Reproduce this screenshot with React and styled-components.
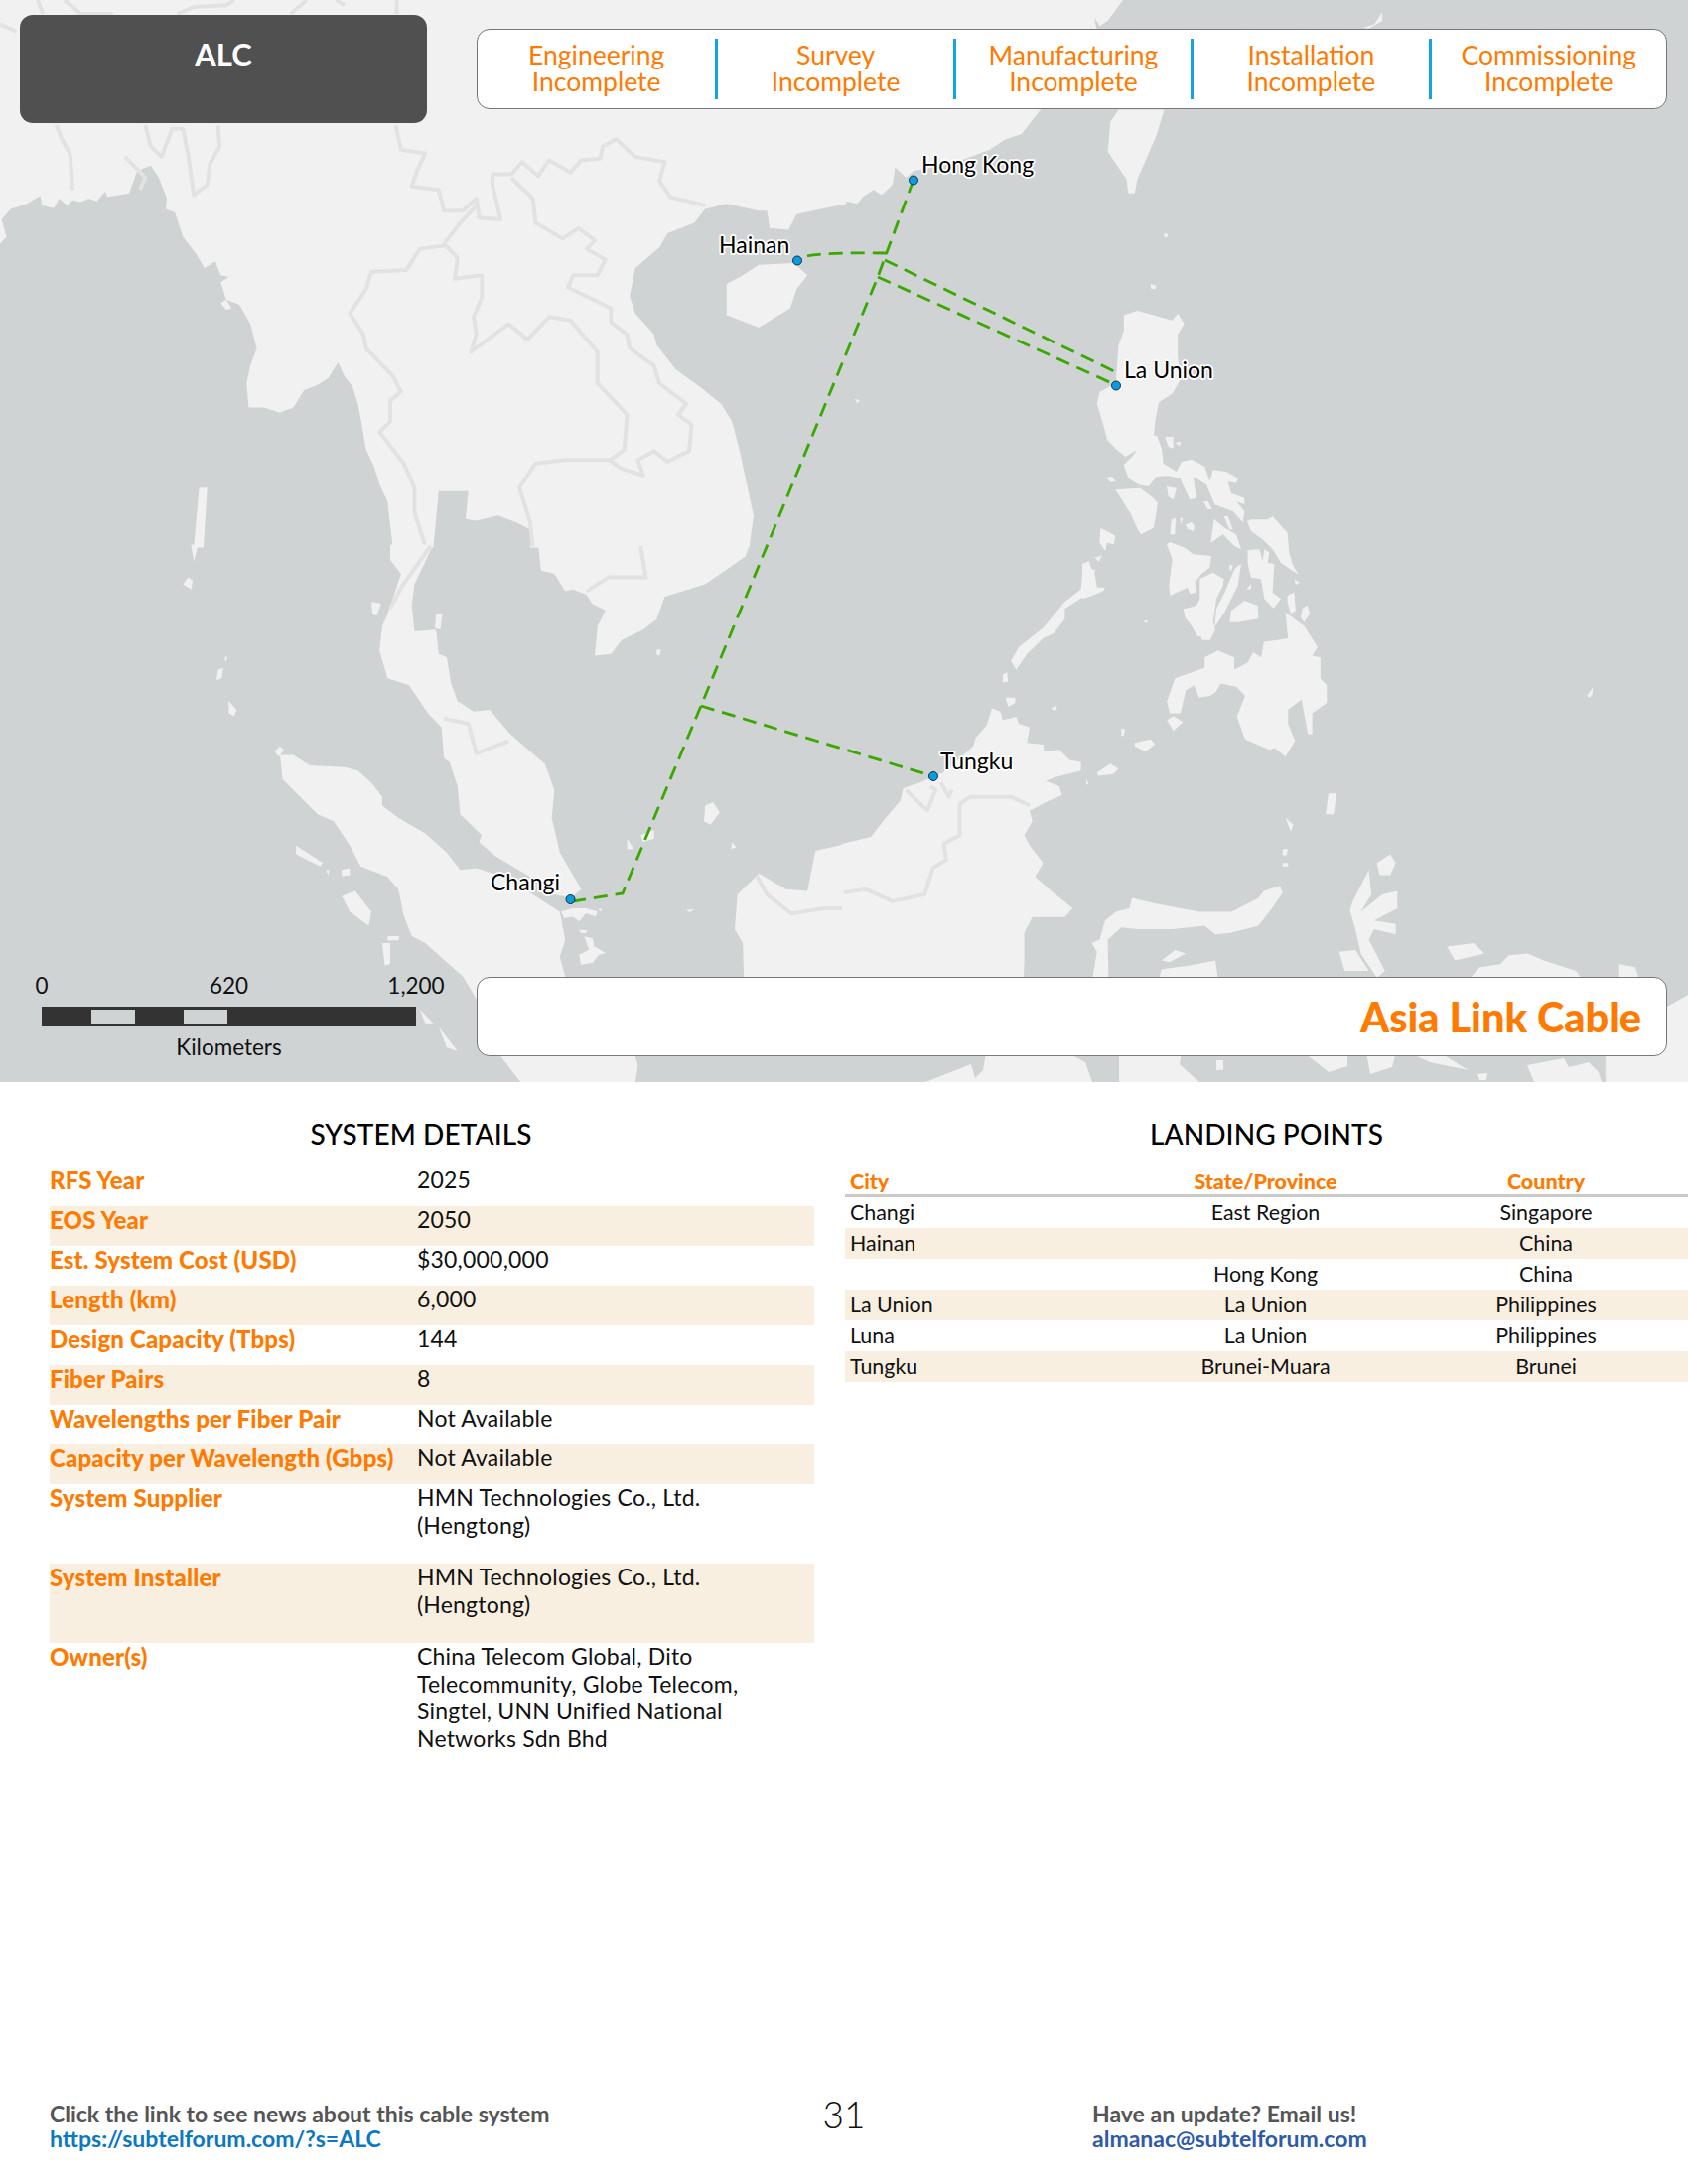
import React from 'react'
import styled, { createGlobalStyle } from 'styled-components'

const SEA = '#cfd3d4'
const LAND = '#f1f1f1'
const BORDER = '#e2e2e2'
const ORANGE = '#ff7a00'
const CABLE = '#3aa800'

const GlobalStyle = createGlobalStyle`
  html, body {
    margin: 0;
    padding: 0;
    background: #fff;
  }
  body {
    font-family: Lato, "Open Sans", "Liberation Sans", sans-serif;
    color: #000;
  }
  * {
    box-sizing: border-box;
  }
`

// land traced per piece of the map, each piece has its own scale below
const TILES = [
  {
    key: 'nw',
    transform: 'scale(.5421 .3509)',
    land: [
      'M-4,-4 L1572,-4 L1572,585 L1480,615 L1465,660 L1430,655 L1425,605 L1410,605 L1350,585 L1310,600 L1290,640 L1240,670 L1225,710 L1180,770 L1170,850 L1180,900 L1215,960 L1220,990 L1255,1060 L1300,1110 L1340,1160 L1360,1210 L1375,1300 L1400,1480 L1392,1572 L985,1572 L990,1525 L960,1500 L925,1480 L885,1495 L865,1490 L870,1410 L815,1410 L805,1572 L730,1572 L725,1510 L720,1440 L705,1390 L695,1340 L680,1290 L670,1200 L665,1160 L655,1110 L640,1080 L628,1040 L610,1085 L590,1105 L565,1120 L545,1170 L520,1185 L490,1170 L462,1170 L458,1100 L465,1050 L477,1000 L465,930 L445,875 L420,860 L410,810 L425,795 L410,790 L400,750 L380,770 L365,730 L340,680 L325,610 L308,600 L310,570 L295,510 L280,475 L255,490 L240,555 L200,565 L195,550 L180,578 L165,570 L150,580 L135,575 L125,590 L110,570 L100,598 L78,590 L75,562 L50,585 L20,600 L3,630 L12,680 L0,700 L-4,700 Z',
      'M1350,815 L1380,790 L1410,760 L1475,755 L1500,790 L1480,830 L1468,885 L1410,940 L1350,905 Z',
      'M370,1400 L385,1400 L378,1572 L360,1572 Z',
      'M410,870 L420,860 L430,885 L420,890 Z',
    ],
    borders: [
      'M105,360 L115,400 L130,440 L135,545',
      'M232,450 L270,510 L260,545',
      'M270,360 L280,420 L300,450 L320,370 L340,370 L350,450 L360,560 L385,530 L390,470 L408,420 L405,360',
      'M735,360 L745,430 L790,440 L775,490 L765,535 L815,545 L825,605 L860,605 L885,570 L890,625 L930,630 L915,530 L915,500 L950,500 L970,465 L1000,505 L1020,460 L1060,495 L1080,460 L1115,455 L1120,420 L1145,400 L1180,450 L1235,465 L1225,520 L1245,565 L1310,590',
      'M950,510 L990,570 L995,640 L1045,685 L1075,655 L1105,690 L1090,715 L1125,745 L1110,790 L1065,790 L1055,825 L1135,885 L1135,925 L1165,960 L1170,1000 L1215,1050 L1225,1100 L1275,1160 L1260,1190 L1285,1220 L1280,1295 L1240,1325 L1215,1295 L1185,1320 L1195,1365 L1155,1345 L1130,1320 L1050,1320 L995,1330 L965,1400 L985,1500 L990,1568',
      'M885,590 L855,640 L825,700 L850,740 L845,800 L895,790 L895,855 L880,910 L885,960 L875,1010 L945,930 L980,975 L1020,910 L1060,920 L1110,1010 L1110,1100 L1165,1190 L1160,1290 L1135,1320',
      'M825,705 L780,715 L755,775 L690,780 L680,830 L650,900 L675,960 L680,1000 L730,1080 L745,1125 L725,1150 L725,1210 L705,1240 L750,1330 L770,1400 L770,1470 L790,1568',
      'M70,0 L80,40',
      'M120,0 L150,40 L210,40',
      'M330,40 L360,20 L420,15 L435,0',
      'M540,40 L570,0',
      'M625,0 L640,15',
      'M737,0 L737,40',
      'M0,70 L30,90',
    ],
  },
  {
    key: 'ne',
    transform: 'translate(850 0) scale(.5421 .3509)',
    land: [
      'M-4,-4 L520,-4 L490,60 L475,75 L465,50 L470,90 L365,315 L330,385 L300,400 L270,430 L200,470 L130,490 L115,510 L95,480 L90,530 L70,560 L55,545 L35,565 L25,585 L-4,575 Z',
      'M510,315 L595,315 L580,390 L545,515 L540,555 L528,555 L525,515 L490,435 L495,350 Z',
      'M965,80 L985,70 L1000,35 L1000,60 L975,82 Z',
      'M520,905 L545,892 L610,920 L620,900 L632,930 L620,960 L620,1020 L625,1090 L610,1130 L585,1155 L578,1210 L575,1265 L490,1265 L478,1200 L470,1160 L475,1125 L505,1100 L510,990 L520,950 Z',
      'M570,815 L580,820 L578,830 L570,828 Z',
      'M595,670 L602,672 L600,682 L595,680 Z',
      'M20,1145 L30,1150 L24,1158 Z',
    ],
    borders: [],
  },
  {
    // philippines, traced at 3x
    key: 'visayas',
    transform: 'translate(1090 440) scale(.3333)',
    land: [
      'M72,5 L110,-4 L225,-4 L240,35 L245,80 L285,105 L300,75 L330,68 L370,90 L385,135 L395,100 L435,105 L470,125 L465,140 L440,135 L450,170 L490,185 L490,205 L465,195 L490,225 L485,258 L455,225 L400,205 L375,145 L335,120 L345,185 L325,190 L295,125 L260,118 L225,120 L200,150 L170,145 L140,125 L125,85 L150,60 L165,40 L130,60 L100,35 Z',
      'M250,0 L275,0 L275,35 L260,30 Z',
      'M280,18 L297,15 L295,28 Z',
      'M72,122 L90,120 L100,135 L85,137 Z',
      'M255,150 L285,155 L275,190 L260,180 Z',
      'M100,160 L175,155 L215,185 L228,200 L220,250 L215,275 L178,295 L170,285 L145,230 Z',
      'M365,195 L380,195 L392,218 L380,220 Z',
      'M270,250 L282,245 L280,295 L265,295 Z',
      'M295,245 L303,245 L298,265 Z',
      'M312,265 L330,258 L340,270 L335,285 L318,278 Z',
      'M428,240 L440,240 L455,280 L445,280 Z',
      'M398,248 L430,275 L465,295 L480,340 L460,330 L425,295 L388,320 Z',
      'M498,255 L510,250 L560,250 L575,240 L620,290 L625,350 L635,385 L652,415 L635,405 L600,380 L575,340 L545,310 L510,285 Z',
      'M500,342 L535,340 L545,375 L550,340 L565,350 L560,380 L580,385 L575,470 L600,490 L578,518 L550,490 L540,430 L510,425 L500,385 Z',
      'M55,275 L85,290 L100,300 L95,325 L75,320 L70,345 L52,320 Z',
      'M38,365 L60,358 L50,378 Z',
      'M0,385 L20,375 L30,405 L40,400 L30,430 L40,455 L68,455 L65,465 L30,480 L0,490 Z',
      'M255,325 L265,318 L310,335 L335,355 L390,360 L385,395 L360,415 L340,440 L345,470 L325,475 L318,455 L265,480 L262,450 L272,370 Z',
      'M445,385 L455,390 L450,405 L445,402 Z',
      'M355,430 L395,410 L428,430 L425,450 L405,490 L395,560 L400,575 L385,604 L350,604 L310,540 L310,520 L345,510 L355,490 Z',
      'M470,390 L480,385 L470,450 L430,530 L400,575 L405,520 L430,470 L460,400 Z',
      'M498,458 L510,445 L510,458 L500,462 Z',
      'M450,525 L490,495 L530,510 L532,550 L470,560 L445,560 Z',
      'M620,480 L640,470 L645,525 L630,535 L620,500 Z',
      'M640,430 L657,440 L645,447 Z',
      'M665,518 L680,510 L688,535 L670,560 L660,545 Z',
      'M188,555 L197,555 L197,562 L188,562 Z',
    ],
    borders: [],
  },
  {
    // riau islands below singapore, traced at 3x
    key: 'riau',
    transform: 'translate(540 860) scale(.3333)',
    land: [
      'M75,175 L110,165 L150,165 L185,175 L180,190 L150,180 L130,205 L110,190 L85,195 Z',
      'M130,230 L155,232 L150,240 L135,240 Z',
      'M145,250 L170,255 L175,280 L210,300 L190,305 L170,330 L135,335 L130,305 L160,290 Z',
      'M190,165 L198,167 L195,175 L190,172 Z',
    ],
    borders: [],
  },
  {
    key: 'sw',
    transform: 'translate(0 550) scale(.5421 .3509)',
    land: [
      'M1000,-4 L1005,70 L1030,80 L1050,130 L1065,125 L1090,140 L1100,165 L1125,185 L1110,230 L1105,315 L1135,310 L1155,270 L1195,240 L1220,210 L1235,145 L1310,110 L1385,30 L1392,-4 Z',
      'M725,-4 L805,-4 L770,110 L765,170 L770,245 L810,240 L815,310 L830,320 L838,395 L850,445 L880,475 L910,470 L945,535 L985,590 L1012,625 L1030,700 L1025,780 L1040,880 L1080,985 L1060,1010 L1030,1000 L985,950 L920,890 L890,850 L895,830 L855,770 L850,690 L835,620 L825,610 L820,520 L795,480 L760,400 L720,380 L705,300 L710,230 L720,195 L730,150 L745,80 L725,40 Z',
      'M520,600 L545,600 L575,630 L640,635 L665,645 L690,680 L710,720 L710,745 L740,780 L790,825 L830,880 L855,930 L885,925 L925,945 L965,975 L1040,1050 L1050,1130 L1040,1180 L1050,1236 L1180,1465 L1185,1490 L1180,1545 L970,1545 L930,1465 L885,1300 L860,1236 L790,1140 L765,1120 L750,1060 L740,985 L720,950 L670,920 L650,860 L620,790 L590,770 L525,670 Z',
      'M1572,855 L1515,875 L1500,990 L1460,985 L1410,940 L1370,1000 L1365,1100 L1380,1140 L1385,1400 L1572,1400 Z',
      'M350,90 L358,100 L355,125 L340,110 Z',
      'M355,-4 L368,-4 L360,45 Z',
      'M405,355 L415,350 L412,380 L402,385 Z',
      'M418,318 L422,318 L421,330 L418,330 Z',
      'M425,445 L440,470 L435,488 L425,480 Z',
      'M550,860 L600,910 L595,920 L550,885 Z',
      'M635,1005 L660,990 L690,1050 L685,1090 L650,1050 Z',
      'M605,930 L612,930 L610,945 Z',
      'M635,930 L650,925 L650,945 L635,948 Z',
      'M720,1120 L742,1120 L740,1132 L720,1132 Z',
      'M710,1140 L725,1140 L725,1200 L715,1205 Z',
      'M780,1330 L805,1370 L790,1370 Z',
      'M815,1380 L850,1450 L830,1440 Z',
      'M1310,745 L1325,735 L1337,765 L1320,800 L1308,790 Z',
      'M1165,840 L1178,870 L1165,870 Z',
      'M1190,830 L1215,815 L1215,840 L1195,850 Z',
      'M1360,850 L1368,865 L1358,870 Z',
      'M1275,1045 L1290,1042 L1282,1052 Z',
      'M1220,298 L1228,298 L1225,315 L1220,312 Z',
      'M510,590 L520,575 L528,585 L518,605 Z',
      'M690,160 L708,165 L700,200 L692,195 Z',
      'M810,195 L822,195 L818,240 L808,235 Z',
    ],
    borders: [
      'M825,495 L870,510 L885,595 L945,560',
      'M800,0 L745,120 L725,180',
      'M1190,0 L1200,90 L1130,90 L1090,130',
      'M1405,945 L1425,1000 L1470,1055 L1530,1040 L1568,1040',
    ],
  },
  {
    key: 'se',
    transform: 'translate(850 550) scale(.5421 .3509)',
    land: [
      'M445,50 L465,70 L470,120 L445,145 L410,180 L410,210 L390,250 L370,265 L340,310 L320,355 L310,330 L325,290 L370,235 L410,160 L440,125 Z',
      'M630,180 L690,170 L680,210 L690,240 L680,270 L665,270 L660,240 L635,210 Z',
      'M820,190 L855,230 L880,290 L870,315 L885,320 L885,380 L897,400 L897,450 L870,480 L870,540 L862,540 L850,440 L825,470 L825,510 L838,560 L820,605 L800,580 L790,585 L745,555 L730,490 L745,430 L730,405 L700,395 L690,420 L680,430 L660,435 L650,400 L635,415 L625,480 L605,480 L600,445 L615,380 L670,350 L670,320 L695,300 L725,320 L725,355 L750,335 L760,305 L775,320 L780,275 L805,270 L825,265 Z',
      'M600,500 L612,488 L630,505 L612,530 Z',
      'M540,565 L570,555 L578,570 L560,590 L540,575 Z',
      'M470,650 L495,625 L510,640 L500,655 L472,660 Z',
      'M295,370 L303,362 L305,390 L295,392 Z',
      'M300,435 L318,435 L318,450 L305,462 Z',
      'M-4,855 L50,835 L75,785 L105,730 L110,695 L140,680 L170,660 L185,650 L240,575 L245,550 L265,515 L275,465 L290,475 L295,500 L320,490 L325,510 L345,520 L340,565 L370,570 L372,590 L400,585 L420,615 L440,620 L440,645 L390,665 L375,675 L400,690 L405,715 L375,735 L345,760 L350,790 L335,830 L345,860 L370,910 L355,950 L385,990 L425,1040 L410,1065 L350,1065 L335,1110 L335,1190 L330,1400 L-4,1400 Z',
      'M810,975 L815,995 L795,1040 L770,1090 L720,1110 L690,1115 L670,1090 L610,1100 L545,1100 L515,1095 L490,1130 L492,1300 L455,1300 L470,1165 L460,1140 L475,1130 L485,1075 L505,1050 L530,1040 L535,1010 L575,1025 L660,1050 L720,1050 L770,1010 L780,990 Z',
      'M575,1300 L590,1215 L640,1205 L690,1190 L700,1300 Z',
      'M590,1190 L615,1160 L635,1170 L605,1195 Z',
      'M990,910 L1015,885 L1025,910 L1015,945 L995,945 Z',
      'M945,1020 L975,930 L980,1000 L960,1050 L1000,1000 L1028,990 L1028,1040 L985,1075 L1025,1085 L1025,1115 L985,1100 L975,1130 L1005,1220 L990,1240 L960,1170 L950,1100 L940,1045 Z',
      'M920,1165 L950,1160 L975,1220 L930,1220 Z',
      'M1130,1300 L1180,1210 L1220,1200 L1235,1175 L1270,1170 L1300,1190 L1360,1220 L1400,1300 Z',
      'M1440,1200 L1470,1210 L1490,1300 L1440,1240 Z',
      'M1120,1150 L1170,1140 L1190,1170 L1135,1190 Z',
      'M900,710 L915,710 L910,770 L895,770 Z',
      'M820,780 L835,800 L830,820 Z',
      'M815,870 L825,870 L822,888 L815,888 Z',
      'M815,910 L825,910 L825,920 L815,920 Z',
      'M1380,430 L1392,405 L1390,425 L1385,435 Z',
      'M450,670 L455,685 L450,685 Z',
      'M385,465 L395,458 L395,470 L388,472 Z',
      'M515,525 L522,525 L520,545 L515,545 Z',
    ],
    borders: [
      'M0,995 L40,985 L90,1020 L150,1000 L165,925 L190,900 L185,855 L215,830 L215,740 L235,720 L310,720 L345,745',
      'M115,700 L135,730 L155,760 L170,700 L160,690',
      'M180,680 L195,720 L200,700',
    ],
  },
]

// strip under the title box, in page pixels
const BOTTOM_LAND = [
  'M932,1090 L978,1072 L982,1086 L990,1078 L993,1060 L1074,1060 L1093,1070 L1100,1090 Z',
  'M1127,1060 L1190,1060 L1188,1072 L1200,1083 L1208,1090 L1127,1090 Z',
  'M1225,1068 L1232,1068 L1232,1078 L1225,1078 Z',
  'M1313,1060 L1338,1080 L1357,1074 L1357,1060 Z',
  'M1376,1060 L1406,1060 L1402,1075 L1380,1082 Z',
  'M1418,1060 L1449,1060 L1479,1078 L1440,1070 Z',
  'M1538,1073 L1575,1066 L1580,1075 L1600,1070 L1610,1080 L1613,1090 L1545,1090 Z',
  'M1488,1082 L1498,1081 L1497,1088 L1490,1088 Z',
  'M1617,1060 L1617,1090 L1700,1090 L1700,1002 L1672,1018 L1672,1060 Z',
]

const CABLES = [
  'M920,181 L884,279 L706,711 L627,900 L577,908',
  'M813,258 Q830,254 893,255',
  'M891,262 L1124,375',
  'M884,279 L1124,388',
  'M706,711 L940,782',
]

const PINS = [
  { name: 'Hong Kong', x: 920, y: 181.5, labelX: 928, labelY: 174 },
  { name: 'Hainan', x: 803, y: 262.5, labelX: 724, labelY: 255 },
  { name: 'La Union', x: 1124, y: 388.5, labelX: 1132, labelY: 381 },
  { name: 'Tungku', x: 940, y: 782, labelX: 947, labelY: 775 },
  { name: 'Changi', x: 494, y: 906, labelX: 494, labelY: 897 },
]

const STAGES = ['Engineering', 'Survey', 'Manufacturing', 'Installation', 'Commissioning']

const DETAILS = [
  { label: 'RFS Year', value: '2025' },
  { label: 'EOS Year', value: '2050' },
  { label: 'Est. System Cost (USD)', value: '$30,000,000' },
  { label: 'Length (km)', value: '6,000' },
  { label: 'Design Capacity (Tbps)', value: '144' },
  { label: 'Fiber Pairs', value: '8' },
  { label: 'Wavelengths per Fiber Pair', value: 'Not Available' },
  { label: 'Capacity per Wavelength (Gbps)', value: 'Not Available' },
  { label: 'System Supplier', value: 'HMN Technologies Co., Ltd. (Hengtong)', height: 80 },
  { label: 'System Installer', value: 'HMN Technologies Co., Ltd. (Hengtong)', height: 80 },
  {
    label: 'Owner(s)',
    value: 'China Telecom Global, Dito Telecommunity, Globe Telecom, Singtel, UNN Unified National Networks Sdn Bhd',
    height: 110,
  },
]

const LANDINGS = [
  ['Changi', 'East Region', 'Singapore'],
  ['Hainan', '', 'China'],
  ['', 'Hong Kong', 'China'],
  ['La Union', 'La Union', 'Philippines'],
  ['Luna', 'La Union', 'Philippines'],
  ['Tungku', 'Brunei-Muara', 'Brunei'],
]

function App() {
  return (
    <Page>
      <GlobalStyle />
      <MapFrame>
        <MapArt viewBox="0 0 1700 1090" aria-hidden="true">
          {TILES.map((tile) => (
            <g key={tile.key} transform={tile.transform}>
              {tile.land.map((d, i) => (
                <path key={i} d={d} fill={LAND} />
              ))}
              {tile.borders.map((d, i) => (
                <BorderLine key={i} d={d} />
              ))}
            </g>
          ))}
          {BOTTOM_LAND.map((d, i) => (
            <path key={i} d={d} fill={LAND} />
          ))}
          <path d="M1617,1065 L1617,1090" stroke={BORDER} strokeWidth="1" />
          {CABLES.map((d, i) => (
            <CableLine key={i} d={d} />
          ))}
          {PINS.map((pin) => (
            <g key={pin.name}>
              <circle
                cx={pin.name === 'Changi' ? 574.5 : pin.x}
                cy={pin.y}
                r="4.5"
                fill="#0b9be0"
                stroke="#12303f"
                strokeWidth="1"
              />
              <PinLabel x={pin.labelX} y={pin.labelY}>
                {pin.name}
              </PinLabel>
            </g>
          ))}
        </MapArt>

        <TopBar>
          <CodeBox>ALC</CodeBox>
          <StatusBox>
            {STAGES.map((stage) => (
              <StatusCell key={stage}>
                {stage}
                <br />
                Incomplete
              </StatusCell>
            ))}
          </StatusBox>
        </TopBar>

        <BottomBar>
          <ScaleBlock>
            <ScaleLabels>
              <ScaleTick>0</ScaleTick>
              <ScaleTick>620</ScaleTick>
              <ScaleTick>1,200</ScaleTick>
            </ScaleLabels>
            <ScaleBar>
              <ScaleSegment $width={47} />
              <ScaleSegment $width={44} $light />
              <ScaleSegment $width={49} />
              <ScaleSegment $width={44} $light />
            </ScaleBar>
            <ScaleUnit>Kilometers</ScaleUnit>
          </ScaleBlock>
          <TitleBox>Asia Link Cable</TitleBox>
        </BottomBar>
      </MapFrame>

      <DetailsGrid>
        <section>
          <SectionTitle $shift={22}>SYSTEM DETAILS</SectionTitle>
          {DETAILS.map((row) => (
            <DetailRow key={row.label} $height={row.height}>
              <DetailLabel>{row.label}</DetailLabel>
              <DetailValue>{row.value}</DetailValue>
            </DetailRow>
          ))}
        </section>
        <section>
          <SectionTitle>LANDING POINTS</SectionTitle>
          <LandingHead>
            <LandingCell>City</LandingCell>
            <LandingCell $center>State/Province</LandingCell>
            <LandingCell $center>Country</LandingCell>
          </LandingHead>
          {LANDINGS.map(([city, state, country], i) => (
            <LandingRow key={i}>
              <LandingCell>{city}</LandingCell>
              <LandingCell $center>{state}</LandingCell>
              <LandingCell $center>{country}</LandingCell>
            </LandingRow>
          ))}
        </section>
      </DetailsGrid>

      <Footer>
        <FooterBlock>
          <FooterNote>Click the link to see news about this cable system</FooterNote>
          <FooterLink>https://subtelforum.com/?s=ALC</FooterLink>
        </FooterBlock>
        <PageNumber>31</PageNumber>
        <FooterBlock $indent>
          <FooterNote>Have an update? Email us!</FooterNote>
          <FooterMail>almanac@subtelforum.com</FooterMail>
        </FooterBlock>
      </Footer>
    </Page>
  )
}

const Page = styled.div`
  width: 1700px;
  height: 2200px;
  display: flex;
  flex-direction: column;
  overflow: hidden;
`

const MapFrame = styled.div`
  position: relative;
  height: 1090px;
  padding: 15px 21px 26px 20px;
  background: ${SEA};
  display: flex;
  flex-direction: column;
  justify-content: space-between;
`

const MapArt = styled.svg`
  position: absolute;
  inset: 0;
  width: 1700px;
  height: 1090px;
`

const BorderLine = styled.path`
  fill: none;
  stroke: ${BORDER};
  stroke-width: 4px;
  stroke-linejoin: round;
  vector-effect: non-scaling-stroke;
`

const CableLine = styled.path`
  fill: none;
  stroke: ${CABLE};
  stroke-width: 2.8px;
  stroke-dasharray: 14 8;
`

const PinLabel = styled.text`
  font-family: Lato, "Open Sans", sans-serif;
  font-size: 23px;
  fill: #000;
  stroke: #fff;
  stroke-width: 3.5px;
  stroke-linejoin: round;
  paint-order: stroke;
`

const TopBar = styled.div`
  position: relative;
  display: flex;
  align-items: flex-start;
  gap: 50px;
`

const CodeBox = styled.div`
  width: 410px;
  height: 109px;
  padding-top: 20px;
  background: #505050;
  border-radius: 13px;
  color: #fff;
  font-size: 31px;
  font-weight: 700;
  line-height: 38px;
  text-align: center;
`

const StatusBox = styled.div`
  flex: 1;
  height: 81px;
  margin-top: 14px;
  padding: 9px 0;
  display: grid;
  grid-template-columns: repeat(5, 1fr);
  background: #fff;
  border: 1.5px solid #777;
  border-radius: 13px;
`

const StatusCell = styled.div`
  padding-top: 3px;
  color: ${ORANGE};
  font-size: 26.5px;
  line-height: 27px;
  text-align: center;
  border-left: 3px solid #12a5e2;

  &:first-child {
    border-left: 0;
  }
`

const BottomBar = styled.div`
  position: relative;
  display: flex;
  align-items: flex-end;
`

const ScaleBlock = styled.div`
  width: 460px;
  margin-bottom: -3px;
  padding-left: 22px;
  color: #111;
  font-size: 22.5px;
  line-height: 24px;
`

const ScaleLabels = styled.div`
  width: 377px;
  display: flex;
  justify-content: space-between;
`

const ScaleTick = styled.span`
  width: 0;
  display: flex;
  justify-content: center;
  white-space: nowrap;
`

const ScaleBar = styled.div`
  width: 377px;
  height: 19.5px;
  margin: 9px 0 9.5px;
  padding: 3px 0 2.5px 3px;
  display: flex;
  background: #333;
`

const ScaleSegment = styled.div`
  width: ${(p) => p.$width}px;
  background: ${(p) => (p.$light ? SEA : 'transparent')};
`

const ScaleUnit = styled.div`
  width: 377px;
  text-align: center;
`

const TitleBox = styled.div`
  flex: 1;
  height: 80px;
  padding-right: 25px;
  display: flex;
  align-items: center;
  justify-content: flex-end;
  background: #fff;
  border: 1.5px solid #777;
  border-radius: 13px;
  color: ${ORANGE};
  font-size: 41.5px;
  font-weight: 900;
`

const DetailsGrid = styled.div`
  padding: 36px 0 0 50px;
  display: grid;
  grid-template-columns: 770px 849px;
  column-gap: 31px;
`

const SectionTitle = styled.h2`
  margin: 0 0 17px;
  padding-right: ${(p) => (p.$shift || 0)}px;
  font-size: 28px;
  font-weight: 500;
  line-height: 32px;
  letter-spacing: 0.1px;
  text-align: center;
  color: #000;
`

const DetailRow = styled.div`
  height: ${(p) => p.$height || 40}px;
  display: flex;
  line-height: 27.5px;

  &:nth-of-type(even) {
    background: #f8efe0;
  }
`

const DetailLabel = styled.div`
  width: 370px;
  color: ${ORANGE};
  font-size: 24px;
  font-weight: 900;
  letter-spacing: 0.15px;
  white-space: nowrap;
`

const DetailValue = styled.div`
  width: 345px;
  color: #111;
  font-size: 23px;
  letter-spacing: 0.2px;
`

const LandingRow = styled.div`
  height: 31px;
  padding-bottom: 1.5px;
  display: grid;
  grid-template-columns: 284px 279px 286px;
  align-items: center;
  font-size: 21.4px;
  line-height: 26px;
  color: #111;

  &:nth-of-type(odd) {
    background: #f8efe0;
  }
`

const LandingHead = styled(LandingRow)`
  padding: 2px 0 0;
  border-bottom: 3px solid #c9c9c9;
  color: ${ORANGE};
  font-size: 21.5px;
  font-weight: 900;

  &:nth-of-type(odd) {
    background: transparent;
  }
`

const LandingCell = styled.div`
  padding-left: ${(p) => (p.$center ? 0 : 5)}px;
  text-align: ${(p) => (p.$center ? 'center' : 'left')};
`

const Footer = styled.div`
  margin-top: auto;
  padding: 0 0 33px 50px;
  display: grid;
  grid-template-columns: 700px 200px 1fr;
  font-size: 23px;
  font-weight: 700;
  line-height: 25px;
`

const FooterBlock = styled.div`
  padding-left: ${(p) => (p.$indent ? 150 : 0)}px;
`

const FooterNote = styled.div`
  color: #555;
`

const FooterLink = styled.div`
  color: #0a78c2;
`

const FooterMail = styled.div`
  color: #2d5ba8;
`

const PageNumber = styled.div`
  height: 25px;
  font-size: 37px;
  font-weight: 300;
  line-height: 25px;
  text-align: center;
  color: #111;
`

export default App
